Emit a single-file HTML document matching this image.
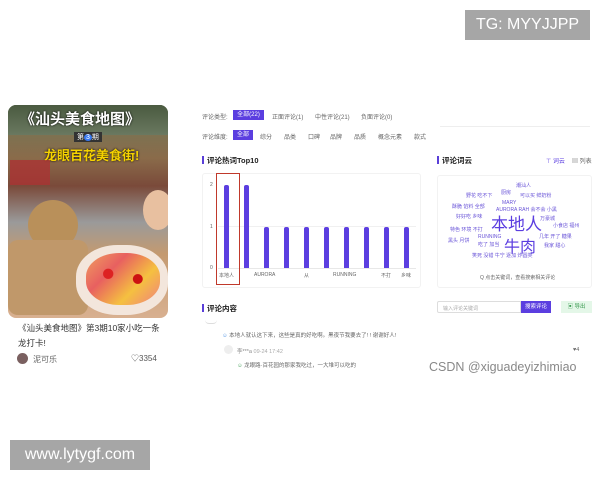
<!DOCTYPE html><html><head><meta charset="utf-8"><style>
*{margin:0;padding:0;box-sizing:border-box}
body{width:600px;height:480px;background:#fff;position:relative;overflow:hidden;font-family:"Liberation Sans","Noto Sans CJK SC",sans-serif;color:#333}
.a{position:absolute;white-space:nowrap}
.s{font-size:6px;color:#666}
.t{font-size:7.5px;font-weight:bold;color:#222}
.t:before{content:"";display:inline-block;width:2px;height:8px;background:#5a3fd8;margin-right:3px;vertical-align:-1px}
.bar{position:absolute;width:5px;background:#5b3ee0;border-radius:2px 2px 0 0}
.w{position:absolute;color:#6a55d8;font-size:5px;white-space:nowrap}
</style></head><body>
<div class="a" style="left:465px;top:10px;width:125px;height:30px;background:#a6a6a6;color:#fff;font-size:16px;line-height:30px;text-align:center">TG: MYYJJPP</div>
<div class="a" style="left:10px;top:440px;width:140px;height:30px;background:#a6a6a6;color:#fff;font-size:16px;line-height:30px;text-align:center">www.lytygf.com</div>

<!-- card -->
<div class="a" style="left:8px;top:105px;width:160px;height:213px;border-radius:8px;overflow:hidden;background:linear-gradient(180deg,#6d7a5a 0%,#8a6b4a 25%,#7a4a3a 38%,#9a9a9a 55%,#c49a70 70%,#d8b090 100%)">
 <div class="a" style="left:0;top:0;width:160px;height:30px;background:linear-gradient(#4a5a40,#6a7860)"></div>
 <div class="a" style="left:12px;top:3px;font-size:15px;font-weight:bold;color:#fff;text-shadow:0 0 2px #000">《汕头美食地图》</div>
 <div class="a" style="left:66px;top:27px;font-size:7px;color:#fff;background:#333;padding:0 3px">第<span style="background:#3a7af0;border-radius:50%;padding:0 2px">3</span>期</div>
 <div class="a" style="left:36px;top:40px;font-size:13px;font-weight:bold;color:#f5d200;text-shadow:0 0 2px #000">龙眼百花美食街!</div>
 <div class="a" style="left:2px;top:55px;width:40px;height:25px;background:#a33;opacity:.8"></div>
 <div class="a" style="left:20px;top:95px;width:50px;height:50px;border-radius:50%;background:#b9905a"></div>
 <div class="a" style="left:0;top:135px;width:80px;height:75px;background:#c0986a;border-radius:10px"></div>
 <div class="a" style="left:68px;top:140px;width:92px;height:70px;border-radius:45%;background:#f3e6dc"></div>
 <div class="a" style="left:78px;top:148px;width:74px;height:52px;border-radius:45%;background:radial-gradient(circle at 30% 40%,#d22 0 8%,transparent 9%),radial-gradient(circle at 70% 50%,#c11 0 8%,transparent 9%),linear-gradient(135deg,#f0a060,#e86060,#f5c040,#f08080)"></div>
 <div class="a" style="left:135px;top:85px;width:30px;height:40px;border-radius:50%;background:#e8c0a0"></div>
</div>
<div class="a" style="left:18px;top:321px;font-size:8.5px;color:#333;line-height:15px;white-space:normal;width:150px">《汕头美食地图》第3期10家小吃一条龙打卡!</div>
<div class="a" style="left:17px;top:353px;width:11px;height:11px;border-radius:50%;background:#7a6060"></div>
<div class="a" style="left:33px;top:354px;font-size:8px;color:#666">泥可乐</div>
<div class="a" style="left:131px;top:353px;font-size:8px;color:#555">♡3354</div>

<!-- filters -->
<div class="a s" style="left:202px;top:112px">评论类型:</div>
<div class="a" style="left:233px;top:110px;width:31px;height:10px;background:#5b3ee0;color:#fff;font-size:6px;line-height:10px;text-align:center">全部(22)</div>
<div class="a s" style="left:272px;top:112px">正面评论(1)</div>
<div class="a s" style="left:315px;top:112px">中性评论(21)</div>
<div class="a s" style="left:361px;top:112px">负面评论(0)</div>
<div class="a" style="left:440px;top:126px;width:150px;height:1px;background:#eee"></div>
<div class="a s" style="left:202px;top:132px">评论维度:</div>
<div class="a" style="left:233px;top:130px;width:20px;height:10px;background:#5b3ee0;color:#fff;font-size:6px;line-height:10px;text-align:center">全部</div>
<div class="a s" style="left:260px;top:132px">综分</div>
<div class="a s" style="left:284px;top:132px">品类</div>
<div class="a s" style="left:308px;top:132px">口碑</div>
<div class="a s" style="left:330px;top:132px">品牌</div>
<div class="a s" style="left:354px;top:132px">品质</div>
<div class="a s" style="left:378px;top:132px">概念元素</div>
<div class="a s" style="left:414px;top:132px">款式</div>

<div class="a t" style="left:202px;top:155px">评论热词Top10</div>
<div class="a t" style="left:437px;top:155px">评论词云</div>
<div class="a" style="left:546px;top:156px;font-size:6px;color:#5b3ee0">⊤ 词云</div>
<div class="a" style="left:572px;top:156px;font-size:6px;color:#666">▤ 列表</div>

<div class="a" style="left:202px;top:173px;width:219px;height:115px;border:1px solid #f2f2f2;border-radius:3px"></div>
<div class="a s" style="left:210px;top:182px;font-size:5px">2</div>
<div class="a s" style="left:210px;top:224px;font-size:5px">1</div>
<div class="a s" style="left:210px;top:265px;font-size:5px">0</div>
<div class="a" style="left:218px;top:226px;width:198px;height:1px;background:#f0f0f0"></div>
<div class="a" style="left:218px;top:268px;width:198px;height:1px;background:#e8e8e8"></div>
<div class="bar" style="left:224px;top:185px;height:83px"></div>
<div class="bar" style="left:244px;top:185px;height:83px"></div>
<div class="bar" style="left:264px;top:227px;height:41px"></div>
<div class="bar" style="left:284px;top:227px;height:41px"></div>
<div class="bar" style="left:304px;top:227px;height:41px"></div>
<div class="bar" style="left:324px;top:227px;height:41px"></div>
<div class="bar" style="left:344px;top:227px;height:41px"></div>
<div class="bar" style="left:364px;top:227px;height:41px"></div>
<div class="bar" style="left:384px;top:227px;height:41px"></div>
<div class="bar" style="left:404px;top:227px;height:41px"></div>
<div class="a s" style="left:219px;top:272px;font-size:5px">本地人</div>
<div class="a s" style="left:254px;top:272px;font-size:5px">AURORA</div>
<div class="a s" style="left:304px;top:272px;font-size:5px">从</div>
<div class="a s" style="left:333px;top:272px;font-size:5px">RUNNING</div>
<div class="a s" style="left:381px;top:272px;font-size:5px">不打</div>
<div class="a s" style="left:401px;top:272px;font-size:5px">乡味</div>
<div class="a" style="left:216px;top:173px;width:24px;height:112px;border:1.5px solid #c0392b"></div>

<div class="a" style="left:437px;top:175px;width:155px;height:113px;border:1px solid #f2f2f2;border-radius:3px"></div>
<div class="w" style="left:516px;top:182px">潮汕人</div>
<div class="w" style="left:466px;top:192px">野花 吃不下</div>
<div class="w" style="left:501px;top:189px">厨房</div>
<div class="w" style="left:520px;top:192px">可以买 鲜奶粉</div>
<div class="w" style="left:502px;top:200px">MARY</div>
<div class="w" style="left:452px;top:203px">酥脆 馅料 全部</div>
<div class="w" style="left:496px;top:206px">AURORA RAH 会不会 小黑</div>
<div class="w" style="left:456px;top:213px">好好吃 乡味</div>
<div class="a" style="left:491px;top:210px;font-size:17px;color:#5b3ee0">本地人</div>
<div class="w" style="left:540px;top:215px">万豪城</div>
<div class="w" style="left:450px;top:226px">特色 环境 不打</div>
<div class="w" style="left:553px;top:222px">小食店 福州</div>
<div class="w" style="left:448px;top:237px">黑头 月饼</div>
<div class="w" style="left:478px;top:234px">RUNNING</div>
<div class="a" style="left:504px;top:233px;font-size:16px;color:#5b3ee0">牛肉</div>
<div class="w" style="left:539px;top:233px">几年 开了 糖果</div>
<div class="w" style="left:478px;top:241px">吃了 加当</div>
<div class="w" style="left:544px;top:242px">我家 甜心</div>
<div class="w" style="left:472px;top:252px">笑死 没错 牛宁 逐加 炸圆类</div>
<div class="a s" style="left:480px;top:274px;font-size:5px">Q 点击关键词，查看搜索相关评论</div>

<div class="a t" style="left:202px;top:303px">评论内容</div>
<div class="a" style="left:437px;top:301px;width:84px;height:12px;border:1px solid #ddd;border-radius:2px 0 0 2px;font-size:5px;color:#aaa;padding:3px 5px">输入评论关键词</div>
<div class="a" style="left:521px;top:301px;width:30px;height:12px;background:#5b3ee0;color:#fff;font-size:5.5px;line-height:12px;text-align:center">搜索评论</div>
<div class="a" style="left:561px;top:301px;width:31px;height:12px;background:#e4f7e8;color:#3a9a50;font-size:5.5px;line-height:12px;text-align:center">▣ 导出</div>
<div class="a" style="left:205px;top:320px;width:12px;height:4px;border-bottom:1px solid #ddd;border-radius:0 0 6px 6px"></div>
<div class="a s" style="left:222px;top:331px;font-size:5.5px"><span style="color:#4a90e2">☺</span> 本地人就认这下来，这些是真的好吃啊。黑夜节我要去了! ! 谢谢好人!</div>
<div class="a" style="left:224px;top:345px;width:9px;height:9px;border-radius:50%;background:#eee"></div>
<div class="a s" style="left:237px;top:347px;font-size:5.5px;color:#888">李***a <span style="color:#aaa">09-24 17:42</span></div>
<div class="a s" style="left:573px;top:347px;font-size:5.5px">♥4</div>
<div class="a s" style="left:237px;top:361px;font-size:5.5px"><span style="color:#3a9a50">☺</span> 龙眼路·百花园的那家我吃过，一大堆可以吃的</div>
<div class="a" style="left:429px;top:360px;font-size:12.5px;color:#888">CSDN @xiguadeyizhimiao</div>
</body></html>
